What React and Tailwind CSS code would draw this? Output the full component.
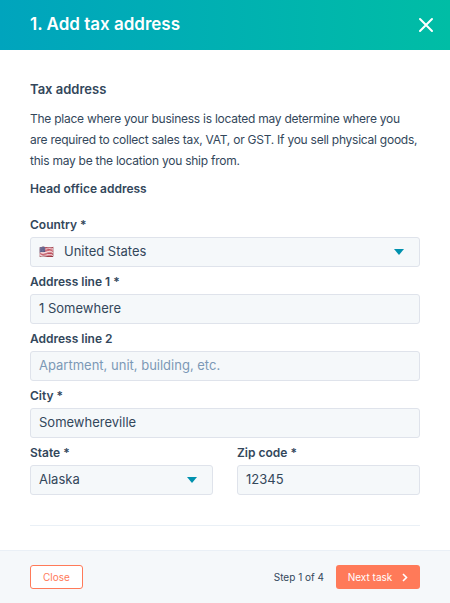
import React from "react";

function Label({ children }) {
  return <div className="h-[16px] mb-[4px] text-[12px] font-semibold text-[#33475b] leading-[16px]">{children}</div>;
}
function Box({ children, className = "" }) {
  return (
    <div className={"h-[30px] rounded-[3px] border border-[#dfe3eb] bg-[#f5f8fa] flex items-center px-[8px] text-[13px] text-[#33475b] " + className}>
      {children}
    </div>
  );
}
const Caret = () => (
  <svg width="10" height="6" viewBox="0 0 10 6" className="ml-auto mr-[7px]"><path d="M0 0h10L5 6z" fill="#0091ae" /></svg>
);

export default function App() {
  return (
    <div className="w-[450px] h-[603px] bg-white flex flex-col overflow-hidden" style={{ fontFamily: "Inter, 'Noto Sans', sans-serif" }}>
      <div className="h-[50px] shrink-0 flex items-center justify-between px-[30px] pr-[16px] bg-gradient-to-r from-[#00a4bd] to-[#00bda5]">
        <div className="text-white text-[17px] font-semibold">1. Add tax address</div>
        <svg width="16" height="16" viewBox="0 0 16 16"><path d="M2 2l12 12M14 2L2 14" stroke="white" strokeWidth="2" strokeLinecap="round" /></svg>
      </div>
      <div className="flex-1 px-[30px] pt-[29px]">
        <div className="text-[13px] font-semibold text-[#33475b] leading-[20px]">Tax address</div>
        <p className="mt-[9px] text-[12px] leading-[21px] tracking-[-0.25px] text-[#33475b]">
          The place where your business is located may determine where you are required to collect sales tax, VAT, or GST. If you sell physical goods, this may be the location you ship from.
        </p>
        <div className="mt-[8px] text-[12px] font-semibold text-[#33475b] leading-[20px]">Head office address</div>
        <div className="mt-[18px]">
          <Label>Country *</Label>
          <Box>
            <span className="text-[12px] mr-[10px]">🇺🇸</span>United States<Caret />
          </Box>
        </div>
        <div className="mt-[7px]">
          <Label>Address line 1 *</Label>
          <Box>1 Somewhere</Box>
        </div>
        <div className="mt-[7px]">
          <Label>Address line 2</Label>
          <Box><span className="text-[#7c98b6]">Apartment, unit, building, etc.</span></Box>
        </div>
        <div className="mt-[7px]">
          <Label>City *</Label>
          <Box>Somewhereville</Box>
        </div>
        <div className="mt-[7px] grid grid-cols-2 gap-[24px]">
          <div>
            <Label>State *</Label>
            <Box>Alaska<Caret /></Box>
          </div>
          <div>
            <Label>Zip code *</Label>
            <Box>12345</Box>
          </div>
        </div>
        <div className="mt-[30px] h-px bg-[#eaf0f6]" />
      </div>
      <div className="h-[53px] shrink-0 border-t border-[#eaf0f6] bg-[#f5f8fa] flex items-center px-[30px]">
        <button className="h-[24px] px-[12px] rounded-[3px] border border-[#ff7a59] bg-white text-[#ff7a59] text-[10px]">Close</button>
        <div className="ml-auto text-[10px] text-[#33475b] mr-[12px]">Step 1 of 4</div>
        <button className="h-[24px] w-[84px] rounded-[3px] bg-[#ff7a59] text-white text-[10px] flex items-center justify-center gap-[10px]">
          Next task
          <svg width="6" height="9" viewBox="0 0 6 9"><path d="M1 1l3.5 3.5L1 8" stroke="white" strokeWidth="1.6" fill="none" /></svg>
        </button>
      </div>
    </div>
  );
}
